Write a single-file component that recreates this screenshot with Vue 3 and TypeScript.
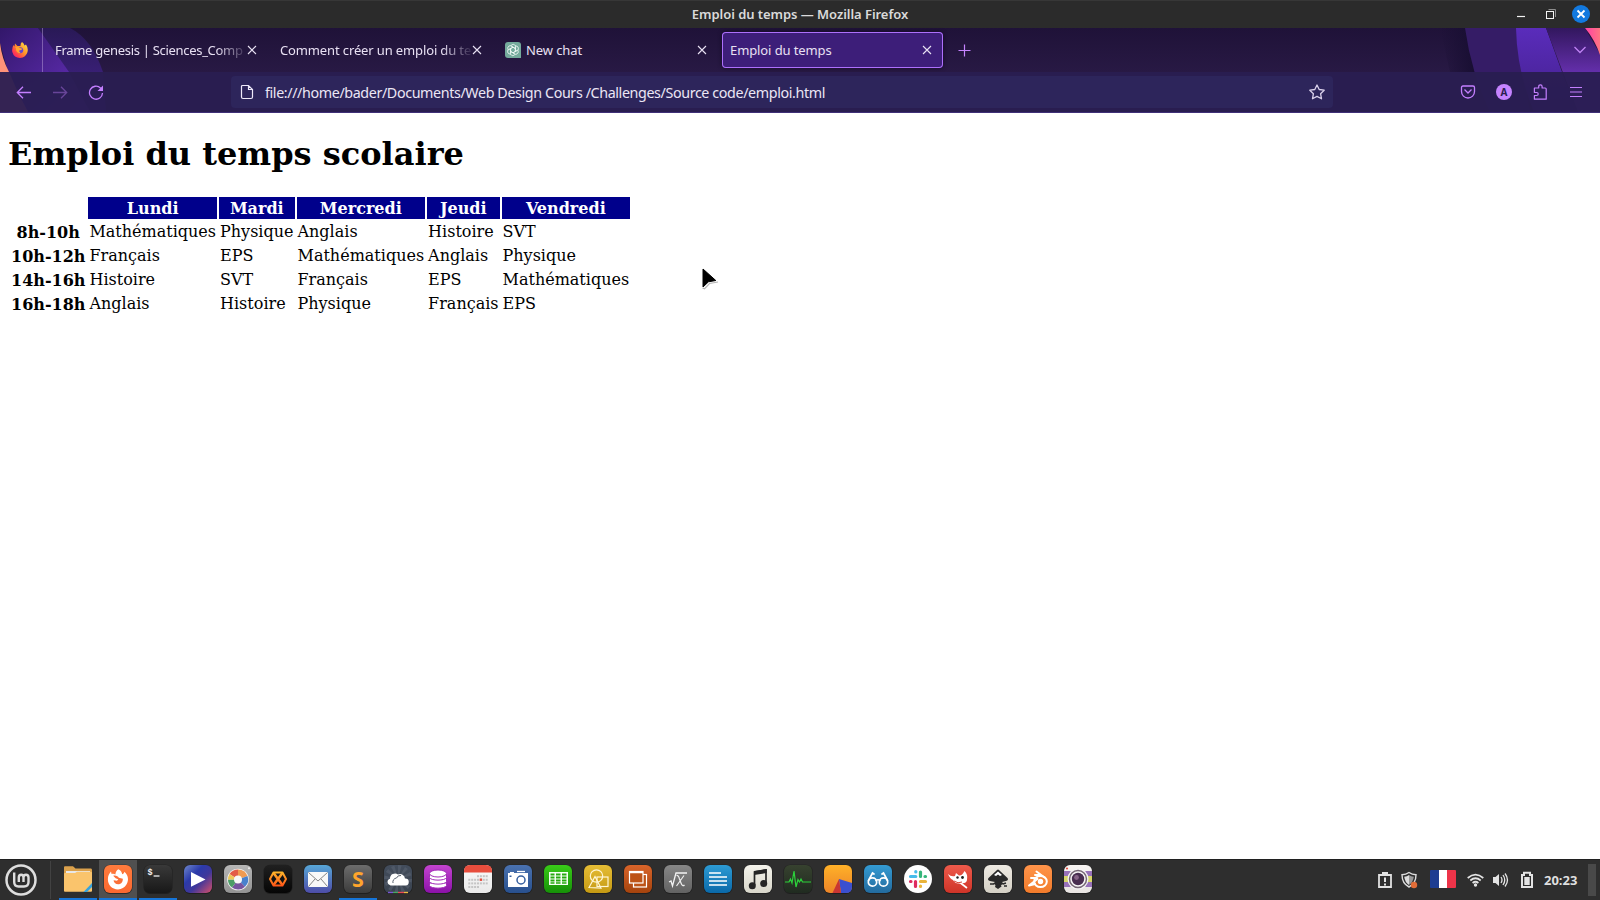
<script setup lang="ts">
interface Tab {
  title: string
  kind: string
  icon?: boolean
  active?: boolean
}

interface Launcher {
  name: string
  from: string
  to: string
  art: string
  open?: boolean
  focused?: boolean
  bare?: boolean
}

const tabs: Tab[] = [
  { title: 'Frame genesis | Sciences_Comp', kind: 'frame' },
  { title: 'Comment créer un emploi du te', kind: 'comment' },
  { title: 'New chat', kind: 'chat', icon: true },
  { title: 'Emploi du temps', kind: 'emploi', active: true },
]

const days: string[] = ['Lundi', 'Mardi', 'Mercredi', 'Jeudi', 'Vendredi']

const rows: { time: string; courses: string[] }[] = [
  { time: '8h-10h', courses: ['Mathématiques', 'Physique', 'Anglais', 'Histoire', 'SVT'] },
  { time: '10h-12h', courses: ['Français', 'EPS', 'Mathématiques', 'Anglais', 'Physique'] },
  { time: '14h-16h', courses: ['Histoire', 'SVT', 'Français', 'EPS', 'Mathématiques'] },
  { time: '16h-18h', courses: ['Anglais', 'Histoire', 'Physique', 'Français', 'EPS'] },
]

const rays = Array.from({ length: 12 }, (_, i) => {
  const a = (i * Math.PI) / 6
  const b = a + Math.PI / 12
  return `<path d="M14 14L${14 + 14 * Math.cos(a)} ${14 + 14 * Math.sin(a)}L${14 + 14 * Math.cos(b)} ${14 + 14 * Math.sin(b)}Z" fill="#5b6573" opacity=".55"/>`
}).join('')

const calendarDots = [0, 1, 2, 3]
  .map((r) =>
    [0, 1, 2, 3, 4, 5, 6]
      .filter((c) => (r === 0 ? c > 2 : r === 3 ? c < 4 : true))
      .map((c) => `<rect x="${4.3 + c * 2.9}" y="${10.2 + r * 3.6}" width="2" height="2" fill="#c5c5c5"/>`)
      .join(''),
  )
  .join('')

const launchers: Launcher[] = [
  {
    name: 'files', from: '', to: '', bare: true, open: true,
    art: '<path d="M0 2.5Q0 1.3 1 1.3H9L11.5 3.5H27Q28 3.5 28 5V25H0Z" fill="#dba14c"/><rect x="2" y="6" width="24" height="4" fill="#e8e8e8"/><path d="M0 9Q0 8 1 8H11L13 6.8H27Q28 6.8 28 8V26Q28 26.8 27 26.8H1Q0 26.8 0 26Z" fill="#fac46c"/><path d="M28 18V22L23 27H19.5Z" fill="#36a3dc"/>',
  },
  {
    name: 'firefox', from: '#ff7b3d', to: '#fb6830', open: true, focused: true,
    art: '<path d="M14.3 4.2C17 5.5 18 7.5 18.2 9.2C20 8.6 20.3 7.6 20.2 6.8C24.4 10 25 15.5 22.6 19.2C20.8 22.5 17.5 24.4 14 24.4C8 24.4 3.9 19.9 3.9 14.5C3.9 11 5 8.7 7 6.5L7.6 9C9 8.6 10.2 8.8 11.4 9.4C11.5 7.3 12.4 5.4 14.3 4.2Z" fill="#fff"/><path d="M9.2 10.8C11.4 9.8 13.8 11 14.8 12.7L18.8 13.7C19 17 17 19.2 14.2 19.2C11.6 19.2 9.6 17.3 9.6 15.2L13 15.7L14.3 14.3L11.6 13.2Z" fill="#fb7038"/>',
  },
  {
    name: 'terminal', from: '#393939', to: '#181818', open: true,
    art: '<text x="3.6" y="10" font-family="Liberation Mono" font-size="8.5" font-weight="bold" fill="#f2f2f2">$</text><path d="M9.6 11H15.5" stroke="#f2f2f2" stroke-width="1.3"/>',
  },
  {
    name: 'player', from: '#6f88cc', to: '#d8506a',
    art: '<path d="M7 7L21.5 14.4L7 21.7Z" fill="#fff"/>',
  },
  {
    name: 'color', from: '#b6b6b6', to: '#929292',
    art: '<circle cx="14" cy="14.5" r="10.8" fill="#f5f5f5"/><path d="M14 14.5L5.5 9A10 10 0 0 1 14 4.5Z" fill="#e35b47"/><path d="M14 14.5V4.5A10 10 0 0 1 23.5 11Z" fill="#f09b51"/><path d="M14 14.5L23.5 11A10 10 0 0 1 21 21.7Z" fill="#4881cd"/><path d="M14 14.5L21 21.7A10 10 0 0 1 8 22.6Z" fill="#76549f"/><path d="M14 14.5L8 22.6A10 10 0 0 1 4 14.5Z" fill="#4c9d67"/><path d="M14 14.5L4 14.5A10 10 0 0 1 5.5 9Z" fill="#edc85b"/><circle cx="14" cy="14.5" r="4" fill="#f7f7f7"/><circle cx="25" cy="3.2" r="1" fill="#eee"/>',
  },
  {
    name: 'hazard', from: '#202020', to: '#050505',
    art: '<g stroke="url(#amber)" fill="none" stroke-linejoin="round"><path d="M6 14L9.500 7.500H18.500L22 14L18.500 20.500H9.500Z" stroke-width="2"/><path d="M9.500 8L18.500 20M18.500 8L9.500 20" stroke-width="2.600"/></g>',
  },
  {
    name: 'mail', from: '#57a6d7', to: '#4d4ca8',
    art: '<rect x="4" y="7" width="20" height="15" rx="1" fill="#f8f8f8"/><path d="M4.5 7.5L14 16L23.5 7.5M4.5 21.5L11 14M23.5 21.5L17 14" fill="none" stroke="#777" stroke-width=".9"/>',
  },
  {
    name: 'editor', from: '#6c6c6c', to: '#3c3c3c', open: true,
    art: '<text x="14" y="21.700" text-anchor="middle" font-family="Open Sans" font-size="21.500" font-weight="700" fill="#ffa52c">S</text>',
  },
  {
    name: 'weather', from: '#434d5c', to: '#3a4350',
    art: rays + '<path d="M6.500 20.500A3.500 3.500 0 0 1 6 13.700A5 5 0 0 1 14 9.500A5 5 0 0 1 21 13.500A3.500 3.500 0 0 1 21.500 20.500Z" fill="#fff"/><path d="M9 18A4 4 0 0 1 12.500 13A4.200 4.200 0 0 1 17 10.500" stroke="#596270" stroke-width="1" fill="none"/><path d="M4 27.500H9" stroke="#7a55d6" stroke-width="1.400"/><path d="M9 27.500H14" stroke="#48a664" stroke-width="1.400"/><path d="M14 27.500H20" stroke="#e64b53" stroke-width="1.400"/><path d="M20 27.500H24" stroke="#edbb43" stroke-width="1.400"/>',
  },
  {
    name: 'database', from: '#c444d0', to: '#8b11a8',
    art: '<g fill="#fff" stroke="#a32db8" stroke-width="1"><path d="M5.500 18V20.500C6.500 24 21.500 24 22.500 20.500V18Z"/><path d="M5.500 13V16.500C6.500 20 21.500 20 22.500 16.500V13Z"/><path d="M5.500 9V12.500C6.500 16 21.500 16 22.500 12.500V9Z"/><ellipse cx="14" cy="8.500" rx="8.500" ry="3.500"/></g>',
  },
  {
    name: 'calendar', from: '#fafafa', to: '#e9e9e9',
    art: '<path d="M0 7.500V6Q0 0 6 0H22Q28 0 28 6V7.500Z" fill="#e74d3d"/>' + calendarDots + '<rect x="15.700" y="13.500" width="2.400" height="2.400" fill="#e74d3d"/>',
  },
  {
    name: 'camera', from: '#4a72b0', to: '#28508e',
    art: '<path d="M4 8H24V22H4Z" fill="#fff"/><path d="M13 6.500H21" stroke="#fff" stroke-width="1.300"/><path d="M6 7.500H10" stroke="#fff"/><circle cx="17" cy="15" r="4" fill="#fff" stroke="#365f9f" stroke-width="1.500"/><rect x="5.500" y="10.500" width="2" height="1.500" fill="#365f9f"/>',
  },
  {
    name: 'spreadsheet', from: '#39cb18', to: '#169108',
    art: '<rect x="5" y="7" width="19" height="13" fill="#f6fff3"/><g fill="#27a910"><path d="M6.500 8.500h4v2h-4zM12 8.500h4.500v2H12zM18 8.500h4.500v2H18zM6.500 11.500h4v2h-4zM12 11.500h4.500v2H12zM18 11.500h4.500v2H18zM6.500 14.500h4v2h-4zM12 14.500h4.500v2H12zM18 14.500h4.500v2H18zM6.500 17.200h4v1.600h-4zM12 17.200h4.500v1.600H12zM18 17.200h4.500v1.600H18z"/></g>',
  },
  {
    name: 'draw', from: '#e6bd35', to: '#c59a13',
    art: '<g fill="none" stroke="#fff6d4" stroke-width="1.200"><circle cx="12.500" cy="11" r="6.200"/><rect x="13" y="12" width="11" height="9.500"/><path d="M5 22.500L11 11.500L17 23Z"/></g>',
  },
  {
    name: 'slides', from: '#d9642a', to: '#a5430d',
    art: '<g fill="#bd5317" stroke="#fff" stroke-width="1.200"><rect x="9.500" y="9.500" width="13" height="12.500"/><rect x="5.500" y="6.500" width="13.500" height="11.500"/></g><path d="M5.500 7.500H19" stroke="#fff" stroke-width="1.500"/>',
  },
  {
    name: 'math', from: '#878787', to: '#626262',
    art: '<path d="M5 17L7 16L8.500 21L12 8H23" fill="none" stroke="#f4f4f4" stroke-width="1.300"/><path d="M12.500 10.500Q14.500 10 15.500 14L17 18Q18.500 22 20.500 20M20 10.500L12.500 21" fill="none" stroke="#eee" stroke-width="1.200"/>',
  },
  {
    name: 'writer', from: '#2d9bd4', to: '#0a69a9',
    art: '<path d="M5 8H17M5 12H23M5 16H23M5 20H23" stroke="#fff" stroke-width="1.700"/>',
  },
  {
    name: 'music', from: '#f4f3eb', to: '#d8d6ca',
    art: '<path d="M10.500 20V7L22 5V18" fill="none" stroke="#252525" stroke-width="1.700"/><path d="M10 6L22.700 4V8L10 10Z" fill="#252525"/><circle cx="8.300" cy="20.700" r="3.500" fill="#252525"/><circle cx="19.700" cy="18.500" r="3.500" fill="#252525"/>',
  },
  {
    name: 'monitor', from: '#37422f', to: '#202b20',
    art: '<path d="M1 17H5L6.500 14L8 18L10 6L12 22L14 14.500L15.500 17L17 14L18.500 17H27" fill="none" stroke="#2cd23b" stroke-width="1.200"/>',
  },
  {
    name: 'usage', from: '#ffb128', to: '#ed8428',
    art: '<path d="M15 14L28 18V22Q28 28 22 28H17Z" fill="#3a4fd0"/><path d="M15 14L8.500 28H17Z" fill="#c93633"/>',
  },
  {
    name: 'glasses', from: '#349bd3', to: '#236b9e',
    art: '<g fill="none" stroke="#fff" stroke-width="1.700" stroke-linecap="round"><circle cx="8.500" cy="17" r="4.200"/><circle cx="19.500" cy="17" r="4.200"/><path d="M12 15.500Q14 14 16 15.500M4.500 15.500L8.500 8L10 9M23.500 15.500L19.500 8L18 9"/></g>',
  },
  {
    name: 'slack', from: '', to: '', bare: true,
    art: '<circle cx="14" cy="14" r="14" fill="#fff"/><g fill="none" stroke-width="3.200" stroke-linecap="round"><path d="M11.800 6.500V7M6.500 11.500H11.800" stroke="#46bceb"/><path d="M16.500 7V11.500M21 11.500H21.500" stroke="#35b67b"/><path d="M16.500 16.500H21.500M16.500 21V21.500" stroke="#eab43a"/><path d="M11.500 16.500V21.500M6.500 16.500H7" stroke="#df2c60"/></g>',
  },
  {
    name: 'gimp', from: '#ee5a4b', to: '#cf3428',
    art: '<path d="M4 9Q7 12 11 11L12 8L15 10.500Q18 11 20.500 6Q24 9 23 15Q22 19 17 18Q12 20 9 15Q6 14 4 9Z" fill="#fff"/><path d="M14 16L23 23" stroke="#fff" stroke-width="1.700"/><g fill="#222"><circle cx="13.500" cy="12.500" r="1.200"/><circle cx="18.500" cy="12.500" r="1.400"/></g><path d="M10 16Q14 19 18 17" stroke="#d64437" fill="none"/>',
  },
  {
    name: 'inkscape', from: '#eeeae2', to: '#d4d0c5',
    art: '<path d="M14 4.500Q15 4.500 16 6L23.500 13Q25 15 22 16L18 17L20 19L17 20L17.500 21.500L14 24L11 22L11.500 20L9 18.500L11 17L6 16Q3 15 4.500 13L12 6Q13 4.500 14 4.500Z" fill="#292929"/><path d="M14 6.500L18 10L16 11L14 9.500L12 11L10 10Z" fill="#fff"/><path d="M6 19H10M19 19L22 18M20 21H23" stroke="#292929" stroke-width="1.500"/>',
  },
  {
    name: 'blender', from: '#ff944a', to: '#f27b2b',
    art: '<g stroke="#fff" stroke-width="2" fill="none" stroke-linecap="round" stroke-linejoin="round"><ellipse cx="16.500" cy="16.500" rx="6.300" ry="5.500"/><path d="M11 19L5 20.500L13.500 14M12.500 13H7M12.500 6.500L20.500 12.500M11 10H17"/></g><circle cx="16.500" cy="16.500" r="2.700" fill="#fff"/>',
  },
  {
    name: 'webcam', from: '#f7f4f2', to: '#e8e4e2',
    art: '<path d="M0 6H28V11H0ZM0 17H28V22H0Z" fill="#9872b9"/><path d="M0 11H28V17H0Z" fill="#d7d66a"/><circle cx="14" cy="14" r="10.500" fill="#f6f4f5"/><circle cx="14" cy="14" r="8.500" fill="none" stroke="#766775" stroke-width="1.500"/><circle cx="14" cy="14" r="6.200" fill="#492e50"/><circle cx="12.500" cy="12.500" r="2.400" fill="#876487"/><circle cx="3" cy="3.500" r="1.100" fill="#e45043"/>',
  },
]
</script>

<template>
  <div class="desktop">
    <header class="titlebar">
      <span class="window-title">Emploi du temps — Mozilla Firefox</span>
      <svg class="window-buttons" width="90" height="28" viewBox="0 0 90 28">
        <path d="M7 16.500H15" stroke="#f1f1f1" stroke-width="1.200" />
        <path d="M38.500 9.500H45.500V17" fill="none" stroke="#8e8e8e" />
        <rect x="36.500" y="11.500" width="7" height="7" fill="none" stroke="#f3f3f3" />
        <circle cx="71" cy="14" r="9" fill="#1279df" />
        <path d="M67.500 10.500L74.500 17.500M74.500 10.500L67.500 17.500" stroke="#fff" stroke-width="1.800" />
      </svg>
    </header>

    <section class="chrome">
      <svg class="theme" width="1600" height="84" viewBox="0 0 1600 84">
        <defs>
          <linearGradient id="swoosh-a" x1="0" y1="0" x2="1" y2="1">
            <stop offset="0" stop-color="#32176a" /><stop offset="1" stop-color="#6a32c2" />
          </linearGradient>
          <linearGradient id="swoosh-b" x1="0" y1="0" x2="0" y2="1">
            <stop offset="0" stop-color="#291956" /><stop offset="1" stop-color="#46248f" />
          </linearGradient>
          <linearGradient id="swoosh-c" x1="0" y1="0" x2="0" y2="1">
            <stop offset="0" stop-color="#5a2cbb" /><stop offset="1" stop-color="#42208b" />
          </linearGradient>
          <linearGradient id="swoosh-d" x1="0" y1="0" x2="0" y2="1">
            <stop offset="0" stop-color="#32175e" /><stop offset=".55" stop-color="#6630ae" />
          </linearGradient>
          <linearGradient id="shade" x1="0" y1="0" x2="1" y2="0">
            <stop offset="0" stop-color="#180e32" stop-opacity="0" /><stop offset="1" stop-color="#180e32" />
          </linearGradient>
          <linearGradient id="flare" x1="0" y1="0" x2="1" y2="0">
            <stop offset="0" stop-color="#ff3fa5" /><stop offset="1" stop-color="#ff7582" />
          </linearGradient>
        </defs>
        <path d="M38 0H70Q92 11 103 44L106 84H80Z" fill="url(#swoosh-b)" />
        <path d="M0 0H38L69 44L90 84H26L8 44L0 15Z" fill="url(#swoosh-a)" />
        <path d="M0 15Q2 31 9 44Q17 64 28 84H0Z" fill="#ff9279" />
        <path d="M1440 0H1465L1475 44H1450Z" fill="url(#shade)" />
        <path d="M1465 0H1517L1523 44L1530 84H1490Q1471 44 1465 0Z" fill="#351c66" />
        <path d="M1516 0H1546L1562 44L1578 84H1534Q1517 44 1516 0Z" fill="url(#swoosh-c)" />
        <path d="M1546 0H1585L1600 26V84H1578Z" fill="url(#swoosh-d)" />
        <path d="M1585 0H1600V27Q1595 12 1585 0Z" fill="url(#flare)" />
      </svg>

      <div class="tabstrip">
        <div class="view">
          <svg width="16" height="16" viewBox="0 0 16 16">
            <defs>
              <linearGradient id="fox" x1="1" y1="0" x2="0" y2="1">
                <stop offset="0" stop-color="#fff04e" /><stop offset=".45" stop-color="#ff9428" /><stop offset=".75" stop-color="#ff3b51" /><stop offset="1" stop-color="#e31587" />
              </linearGradient>
            </defs>
            <path d="M10 0Q12 1 12.500 3.500L14 2.500Q16.500 6 15.500 10Q14 15.500 8 16Q2 15.800 .3 10Q-.3 6 1.500 3L2.500 4.500L3 1.500L5.500 4L8.500 4Q8.300 1.500 10 0Z" fill="url(#fox)" />
            <circle cx="8.200" cy="8.200" r="3" fill="#6744cd" />
            <path d="M3 5Q6 4 8 6L10.500 6.700Q9 8.500 7.500 8.200Q6.500 10 8.500 10.500Q7 12 5 10Q3.500 8 4 6Z" fill="#ffa52f" />
          </svg>
        </div>
        <div v-for="tab in tabs" :key="tab.kind" class="tab" :class="[tab.kind, { active: tab.active }]">
          <svg v-if="tab.icon" class="favicon" width="16" height="16" viewBox="0 0 16 16">
            <path d="M3 0H13Q16 0 16 3V16H3Q0 16 0 13V3Q0 0 3 0Z" fill="#74aa9c" />
            <g fill="none" stroke="#eef7f4" stroke-width=".8">
              <path v-for="i in 6" :key="i" :transform="`rotate(${i * 60} 8 8)`" d="M8 5.200L5.600 6.600V10.800M5.700 3.700Q8 .8 10.500 3.500L10.500 6.700" />
            </g>
          </svg>
          <span class="tab-title">{{ tab.title }}</span>
          <svg class="close" width="10" height="10" viewBox="0 0 10 10">
            <path d="M1 1L9 9M9 1L1 9" stroke="#e9e2f4" stroke-width="1.100" />
          </svg>
        </div>
        <svg class="plus" width="13" height="13" viewBox="0 0 13 13">
          <path d="M6.500 .5V12.500M.5 6.500H12.500" stroke="#c583ff" stroke-width="1.200" />
        </svg>
        <svg class="chevron" width="14" height="8" viewBox="0 0 14 8">
          <path d="M1.500 1L7 6.500L12.500 1" fill="none" stroke="#c083f5" stroke-width="1.300" />
        </svg>
      </div>

      <div class="toolbar">
        <nav class="nav">
          <svg width="16" height="16" viewBox="0 0 16 16"><path d="M15 8.500H1.500M7 2.800L1.300 8.500L7 14.200" fill="none" stroke="#c47fff" stroke-width="1.300" /></svg>
          <svg class="disabled" width="16" height="16" viewBox="0 0 16 16"><path d="M1 8.500H14.500M9 2.800L14.700 8.500L9 14.200" fill="none" stroke="#c47fff" stroke-width="1.300" /></svg>
          <svg width="16" height="16" viewBox="0 0 16 16"><path d="M14.500 9A6.500 6.500 0 1 1 12.500 4L14 5.500" fill="none" stroke="#c47fff" stroke-width="1.300" /><path d="M15 1.500V7H9.500Z" fill="#c47fff" /></svg>
        </nav>
        <div class="urlbar">
          <svg width="14" height="16" viewBox="0 0 14 16"><path d="M2.500 1.500H8.500L12.500 5.500V13Q12.500 14.500 11 14.500H3Q1.500 14.500 1.500 13V2.500Q1.500 1.500 2.500 1.500ZM8.500 1.500V5.500H12.500" fill="none" stroke="#eee9fa" stroke-width="1.200" /></svg>
          <span class="url">file:///home/bader/Documents/Web Design Cours /Challenges/Source code/emploi.html</span>
          <svg class="star" width="16" height="16" viewBox="0 0 16 16"><path d="M8 1L10.200 5.500L15.200 6.200L11.600 9.700L12.500 14.800L8 12.400L3.500 14.800L4.400 9.700L.8 6.200L5.800 5.500Z" fill="none" stroke="#d9d0eb" stroke-width="1.300" stroke-linejoin="round" /></svg>
        </div>
        <div class="actions">
          <svg width="16" height="16" viewBox="0 0 16 16"><path d="M3 2H13Q14.500 2 14.500 3.500V7.500A6.500 6.500 0 0 1 1.500 7.500V3.500Q1.500 2 3 2ZM4.500 5.500L8 9L11.500 5.500" fill="none" stroke="#c47fff" stroke-width="1.300" /></svg>
          <span class="account">A</span>
          <svg width="16" height="16" viewBox="0 0 16 16"><path d="M2.400 4H6.700V2.500Q6.700 .8 8.400 .8Q10.100 .8 10.100 2.500V4H13.200Q14.200 4 14.200 5V15.200H2.400V11.500H4.700Q6.200 11.500 6.200 10Q6.200 8.500 4.700 8.500H2.400Z" fill="none" stroke="#c47fff" stroke-width="1.200" stroke-linejoin="round" /></svg>
          <svg width="16" height="16" viewBox="0 0 16 16"><path d="M2 3.500H14M2 8H14M2 12.500H14" stroke="#c47fff" stroke-width="1.200" /></svg>
        </div>
      </div>
    </section>

    <main class="page">
      <h1>Emploi du temps scolaire</h1>
      <table>
        <thead>
          <tr>
            <td></td>
            <th v-for="day in days" :key="day" class="day">{{ day }}</th>
          </tr>
        </thead>
        <tbody>
          <tr v-for="row in rows" :key="row.time">
            <th>{{ row.time }}</th>
            <td v-for="(course, i) in row.courses" :key="i">{{ course }}</td>
          </tr>
        </tbody>
      </table>
      <svg class="cursor" width="22" height="26" viewBox="0 0 22 26">
        <path d="M1.500 20L3.500 20.800L8.500 15.500L17 14" fill="none" stroke="#b5b5b5" stroke-width="1.200" />
        <path d="M2 1V19L7.500 13.800L14.800 12.500Z" fill="#000" stroke="#000" stroke-linejoin="round" />
      </svg>
    </main>

    <footer class="taskbar">
      <div class="menu">
        <svg width="34" height="34" viewBox="0 0 34 34">
          <g fill="none" stroke="#dedede">
            <circle cx="17" cy="17" r="14.500" stroke-width="2.500" />
            <path d="M10.200 9.500V19Q10.200 23.500 14.500 23.500H20Q24.500 23.500 24.500 19V14.500Q24.500 11.800 22 11.800Q19.500 11.800 19.500 14.500V19M19.500 14.500Q19.500 11.800 17.200 11.800Q14.800 11.800 14.800 14.500V19" stroke-width="2.400" />
          </g>
        </svg>
      </div>
      <div class="launchers">
        <div v-for="app in launchers" :key="app.name" class="launcher" :class="{ open: app.open, focused: app.focused }">
          <svg width="30" height="30" viewBox="-1 -1 30 30">
            <defs>
              <linearGradient :id="`bg-${app.name}`" x1="0" y1="0" :x2="app.name === 'player' ? 1 : 0" y2="1">
                <stop offset="0" :stop-color="app.from || '#fff'" />
                <stop v-if="app.name === 'player'" offset=".35" stop-color="#2b3aaa" />
                <stop v-if="app.name === 'player'" offset=".6" stop-color="#40379a" />
                <stop offset="1" :stop-color="app.to || '#fff'" />
              </linearGradient>
              <linearGradient v-if="app.name === 'hazard'" id="amber" gradientUnits="userSpaceOnUse" x1="0" y1="6" x2="0" y2="22">
                <stop offset="0" stop-color="#ffbd2c" />
                <stop offset="1" stop-color="#ff4e16" />
              </linearGradient>
            </defs>
            <rect v-if="!app.bare" x="-.5" y="-.3" width="29" height="29.300" rx="6.500" fill="#171717" opacity=".65" />
            <rect v-if="!app.bare" width="28" height="28" rx="6" :fill="`url(#bg-${app.name})`" />
            <g v-html="app.art"></g>
          </svg>
        </div>
      </div>
      <div class="tray">
        <svg width="16" height="18" viewBox="0 0 16 18"><path d="M2 4H14V16H2Z" fill="none" stroke="#e2e2e2" stroke-width="1.800" /><path d="M5 1H11V5H5ZM7 6.500H9V11H7ZM7 12.500H9V14.500H7Z" fill="#e2e2e2" /></svg>
        <svg class="shield" width="17" height="18" viewBox="0 0 17 18"><path d="M8 1.500Q11 3.700 15 3.800Q15 12.500 8 16Q1 12.500 1 3.800Q5 3.700 8 1.500Z" fill="none" stroke="#ddd" stroke-width="1.400" /><path d="M8 4Q10 5.500 12.800 5.700Q12 11.500 8 14Z" fill="#999" /><path d="M8 4Q6 5.500 3.200 5.700Q4 11.500 8 14Z" fill="#ddd" /><circle cx="13" cy="14" r="3.200" fill="#e16d38" /></svg>
        <span class="flag"></span>
        <svg class="wifi" width="17" height="15" viewBox="0 0 17 15"><g fill="none" stroke="#e4e4e4" stroke-width="1.700"><path d="M.7 5Q8.500 -1.700 16.300 5M3.300 7.500Q8.500 3 13.700 7.500M5.600 10Q8.500 7.500 11.400 10" /></g><circle cx="8.500" cy="12" r="1.700" fill="#e4e4e4" /></svg>
        <svg class="sound" width="17" height="16" viewBox="0 0 17 16"><path d="M1 5H3.500L7 2V14L3.500 11H1Z" fill="#e4e4e4" /><path d="M9 5Q11 8 9 11M11 3Q14.500 8 11 13M13 1.500Q18 8 13 14.500" fill="none" stroke="#e4e4e4" stroke-width="1.300" /></svg>
        <svg class="battery" width="14" height="18" viewBox="0 0 14 18"><path d="M2 4H4V1.800H10V4H12V16H2Z" fill="none" stroke="#e4e4e4" stroke-width="2" /><rect x="4.300" y="6" width="5.400" height="8" fill="#e4e4e4" /></svg>
        <span class="clock">20:23</span>
        <span class="show-desktop"></span>
      </div>
    </footer>
  </div>
</template>

<style>
body {
  margin: 0;
  overflow: hidden;
}
</style>

<style scoped>
.desktop {
  width: 1600px;
  height: 900px;
  display: flex;
  flex-direction: column;
  overflow: hidden;
  background: #fff;
  font-family: "Noto Sans", "Open Sans", sans-serif;
}
svg {
  display: block;
  flex: none;
}
.titlebar {
  height: 28px;
  box-sizing: border-box;
  border-top: 1px solid #373737;
  background: #2b2b2b;
  display: grid;
  grid-template-columns: 90px 1fr 90px;
  align-items: center;
}
.window-title {
  grid-column: 2;
  text-align: center;
  color: #dadada;
  font-size: 13px;
  font-weight: 600;
  letter-spacing: -0.05px;
  line-height: 24px;
  padding-bottom: 2px;
}
.window-buttons {
  margin-top: -1px;
}
.chrome {
  position: relative;
  height: 85px;
  flex: none;
  background: linear-gradient(#1f1238, #281944 44px, #281944);
}
.theme {
  position: absolute;
  inset: 0;
}
.tabstrip {
  position: relative;
  height: 44px;
  display: flex;
  align-items: center;
}
.view {
  width: 43px;
  height: 44px;
  border-right: 1px solid rgba(196, 170, 225, 0.45);
  display: flex;
  align-items: center;
  padding-left: 12px;
  box-sizing: border-box;
  margin-right: 5px;
}
.tab {
  width: 221px;
  height: 36px;
  margin-right: 4px;
  padding: 0 11px 0 8px;
  box-sizing: border-box;
  display: flex;
  align-items: center;
  color: #e8e0f3;
  font-size: 13px;
  letter-spacing: -0.1px;
  border-radius: 4px;
}
.frame {
  margin-left: -1px;
}
.active {
  background: #3d1e79;
  box-shadow: inset 0 0 0 1px #ad70fb, 0 0 4px rgba(10, 4, 25, 0.6);
}
.favicon {
  margin-right: 5px;
}
.tab-title {
  flex: 1;
  white-space: nowrap;
}
.frame .tab-title {
  letter-spacing: -0.3px;
}
.comment .tab-title {
  letter-spacing: -0.13px;
}
.frame .tab-title,
.comment .tab-title {
  mask-image: linear-gradient(to right, #000 84%, transparent 101%);
}
.plus {
  margin-left: 11px;
}
.chevron {
  margin-left: auto;
  margin-right: 13px;
}
.toolbar {
  position: relative;
  height: 41px;
  box-sizing: border-box;
  border-bottom: 1px solid #403078;
  background: rgba(41, 30, 81, 0.95);
  display: flex;
  align-items: center;
}
.nav {
  width: 231px;
  padding-left: 16px;
  box-sizing: border-box;
  display: flex;
  gap: 20px;
}
.disabled {
  opacity: 0.4;
}
.urlbar {
  width: 1102px;
  height: 32px;
  border-radius: 4px;
  background: #2d255b;
  display: flex;
  align-items: center;
  padding: 0 8px 0 9px;
  box-sizing: border-box;
}
.url {
  margin-left: 11px;
  color: #ebe6f5;
  font-size: 14.3px;
  letter-spacing: -0.39px;
  white-space: pre;
}
.star {
  margin-left: auto;
}
.actions {
  flex: 1;
  display: flex;
  align-items: center;
  justify-content: flex-end;
  gap: 20px;
  padding-right: 16px;
}
.account {
  width: 16px;
  height: 16px;
  border-radius: 50%;
  background: #c583ff;
  color: #291d4f;
  font-size: 10px;
  font-weight: 700;
  line-height: 16px;
  text-align: center;
}
.page {
  position: relative;
  flex: 1;
  padding: 21px 8px 0;
  color: #000;
  font-family: "DejaVu Serif", serif;
  font-size: 16px;
}
h1 {
  margin: 0 0 21px;
  font-size: 32px;
  line-height: 40px;
}
table {
  border-spacing: 2px;
  line-height: 20px;
}
th {
  padding: 2px 1px 0;
  height: 20px;
}
td {
  padding: 1px;
  height: 20px;
}
.day {
  background: #00008b;
  color: #fff;
}
.cursor {
  position: absolute;
  left: 701px;
  top: 155px;
}
.taskbar {
  height: 41px;
  box-sizing: border-box;
  border-top: 1px solid #202020;
  background: #2e2e2e;
  display: flex;
}
.menu {
  width: 51px;
  height: 38px;
  margin-top: 1px;
  padding: 2px 0 0 4px;
  box-sizing: border-box;
  border-right: 1px solid #424242;
}
.launchers {
  display: flex;
  gap: 2px;
  margin-left: 8px;
}
.launcher {
  width: 38px;
  height: 40px;
  box-sizing: border-box;
  padding: 4px 0 0 4px;
  border-bottom: 2px solid transparent;
}
.launcher.focused {
  background: #505050;
}
.launcher.open {
  border-bottom-color: #1675d8;
}
.tray {
  margin-left: auto;
  display: flex;
  align-items: center;
  padding-right: 4px;
}
.shield {
  margin-left: 8px;
}
.flag {
  width: 26px;
  height: 18px;
  margin-left: 12px;
  margin-top: -2px;
  background: linear-gradient(to right, #1d3d91 33.3%, #fff 33.3% 66.6%, #ed3449 66.6%);
  border-radius: 1px;
}
.wifi {
  margin-left: 11px;
}
.sound {
  margin-left: 8px;
}
.battery {
  margin-left: 11px;
}
.clock {
  width: 36px;
  margin-left: 10px;
  margin-right: 8px;
  color: #dfdfdf;
  font-size: 13px;
  font-weight: 700;
  white-space: nowrap;
}
.show-desktop {
  width: 8px;
  height: 32px;
  background: #494949;
}
</style>
